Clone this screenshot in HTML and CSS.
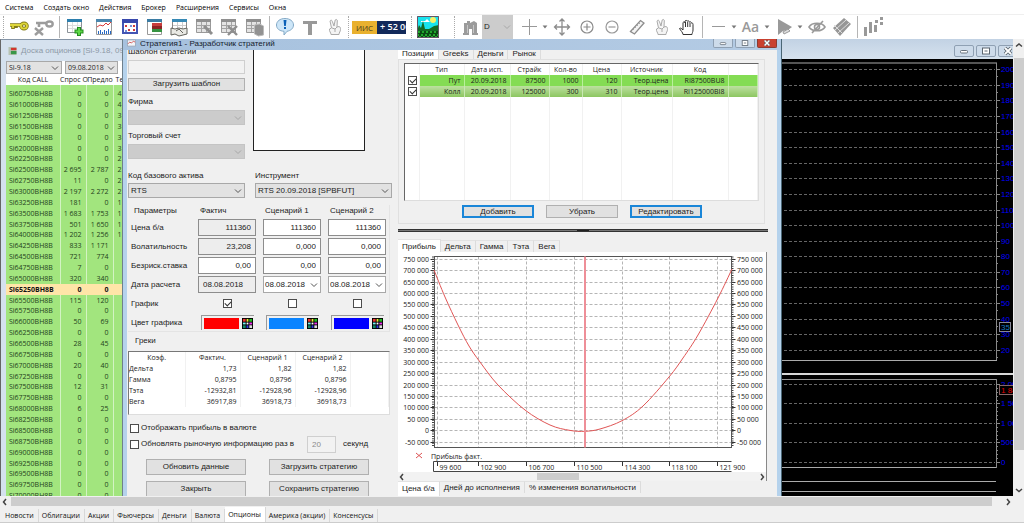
FILE: index.html
```
<!DOCTYPE html>
<html lang="ru">
<head>
<meta charset="utf-8">
<title>Терминал</title>
<link rel="stylesheet" href="styles.css">
</head>
<body>
<div class="app">
<nav class="menu">
<button>Система</button><button>Создать окно</button><button>Действия</button><button>Брокер</button><button>Расширения</button><button>Сервисы</button><button>Окна</button>
</nav>
<div class="toolbar">
<span class="grip"></span>
<button class="tool" aria-label="Подключить"><svg viewBox="0 0 20 20"><g fill="none" stroke="#827b18" stroke-width="3.6"><path d="M1 8h11M4 9v3M7 9v2"/><ellipse cx="15" cy="9" rx="3" ry="2.6"/></g><g fill="none" stroke="#ded63a" stroke-width="1.8"><path d="M1 8h11M4 9v2"/><ellipse cx="15" cy="9" rx="3" ry="2.6"/></g></svg></button>
<button class="tool" aria-label="Отключить"><svg viewBox="0 0 20 20" fill="none" stroke="#9c9c9c"><path stroke-width="2.6" d="M2 6h10M5 7v3"/><ellipse cx="15.500" cy="7" rx="3.200" ry="2.500" stroke-width="2.400"/><path stroke-width="2.4" d="M1 11l8 7M9 11l-8 7"/></svg></button>
<span class="sep"></span>
<button class="tool gap-after" aria-label="Новая таблица"><svg viewBox="0 0 20 20"><path fill="#fff" stroke="#8b9298" d="M2.500 2.500h14v13h-14z"/><path fill="#2d7fae" d="M2 2h15v3H2z"/><path stroke="#ddd" d="M7.500 5v10M12.500 5v10M3 8.500h13M3 11.500h13"/><path stroke="#238d1e" stroke-width="4" d="M14 10v9M9.500 14.500h9"/><path stroke="#5dd746" stroke-width="2" d="M14 11v7M10.500 14.500h7"/></svg></button>
<button class="tool" aria-label="График"><svg viewBox="0 0 20 20"><path fill="#fff" stroke="#9a9a9a" d="M2.500 2.500h15v15h-15z"/><path fill="#4a86ae" d="M2 2h16v3H2z"/><path fill="none" stroke="#d83a3a" d="M3 10l3-2 3 1 3-3 2 2 3-3"/><path stroke="#2869c4" d="M4.500 17v-3M6.500 17v-4M8.500 17v-2M10.500 17v-4M12.500 17v-3M14.500 17v-5M16.500 17v-3"/></svg></button>
<button class="tool" aria-label="Карта"><svg viewBox="0 0 20 20"><path fill="#fff" stroke="#4355b4" stroke-width="2" d="M4 3h14v13H4z"/><path fill="#3849ac" d="M3 2h16v4H3z"/><path fill="#d23b3b" d="M6 8h2v2H6zM14 8h2v2h-2zM9 12h2v2H9zM14 12h2v2h-2z"/><path fill="#7490da" d="M6 13h2v2H6zM11 8h2v2h-2z"/></svg></button>
<button class="tool" aria-label="Котировки"><svg viewBox="0 0 20 20"><path fill="#fff" stroke="#999" d="M3.500 2.500h14v15h-14z"/><path fill="#3b7ca4" d="M3 2h15v3H3z"/><path fill="#c83d3d" d="M8 6h10v3H8z"/><path fill="#8c2525" d="M8 9h10v3H8z"/><path fill="#369342" d="M8 12h10v3H8z"/></svg></button>
<button class="tool" aria-label="Сделки"><svg viewBox="0 0 20 20"><path fill="#fff" stroke="#888" d="M3.500 2.500h14v13h-14z"/><path fill="#3789b5" d="M3 2h15v3H3z"/><path stroke="#ccc" d="M8.500 5v7M13.500 5v7M4 8.500h13"/><path fill="#e9e9e4" stroke="#64645e" d="M2 11l4 1 4-1 4 1 4-1v6l-4 1-4 1-4-2-4 1zM7 14l3-2 4 4"/></svg></button>
<button class="tool" aria-label="Настройка таблицы"><svg viewBox="0 0 20 20"><use href="#grey-table"/><path stroke="#8e8e8e" stroke-width="3" d="M10 9l8 8"/></svg></button>
<button class="tool" aria-label="Удалить таблицу"><svg viewBox="0 0 20 20"><use href="#grey-table"/><path stroke="#8e8e8e" stroke-width="2.400" d="M9 9l9 9M18 9l-9 9"/></svg></button>
<button class="tool" aria-label="Копировать таблицу"><svg viewBox="0 0 20 20"><use href="#grey-table"/><path fill="#929292" stroke="#bbb" d="M10.500 8l5-1 4 2v9l-5 1-4-2z"/></svg></button>
<span class="sep"></span>
<button class="tool" aria-label="Сообщения"><svg viewBox="0 0 20 20"><path fill="#cde6f8" stroke="#83a9c6" d="M10 1.500c5 0 8.500 2.800 8.500 6.500 0 3.400-2.800 5.700-6.500 6.300L9 18v-3.700C4.400 14 1.500 11.700 1.500 8 1.500 4.300 5 1.500 10 1.500z"/><path fill="#0b61b8" d="M8.500 3h3l-.7 6H9.200zM9 10h2v2H9z"/></svg></button>
<button class="tool" aria-label="Текст"><svg viewBox="0 0 20 20"><path fill="#999" d="M3 4h14v3h-5v11H8V7H3z"/></svg></button>
<button class="tool" aria-label="Рука"><svg viewBox="0 0 20 20"><use href="#hand-v"/></svg></button>
<span class="grip"></span>
<button class="promo"><b>ИИС</b><span>+ 52 000</span></button>
<span class="grip"></span>
<button class="tool picture" aria-label="Фон"><svg viewBox="0 0 22 22"><path fill="#19e3ee" d="M0 0h22v22H0z"/><path fill="#fff" d="M4 5h4l2-2 3 3H4z"/><circle cx="16" cy="4" r="3" fill="#f7f169"/><path fill="#146a25" d="M0 15l2-6 2 3 2-7 2 8 4 0 5-3 5-1v13H0z"/><path fill="#0b4a12" d="M0 15h22v7H0z"/><path fill="none" stroke="#29c735" stroke-width="1.500" stroke-dasharray="2 2" d="M1 16h20M0 19h21M2 21h20"/><path fill="none" stroke="#656" d="M.500.500h21v21H.500z"/></svg></button>
<span class="grip"></span>
<button class="tool" aria-label="Биржа"><svg viewBox="0 0 20 20"><path fill="#9b9b9b" d="M4 6h3V4h3v2l4-2 3 2v10h1v2H3v-2h1z"/><path stroke="#c6c6c6" d="M7.500 8v8M13.500 8v8"/><path fill="#fff" d="M9 12h3v6H9z"/></svg></button>
<label class="interval"><select aria-label="Интервал"><option>D</option></select><svg class="chev" viewBox="0 0 8 8"><use href="#chevron"/></svg></label>
<button class="tool" aria-label="Перекрестие"><svg viewBox="0 0 20 20"><path stroke="#999" d="M10.500 2v16M3 9.500h15"/></svg></button>
<button class="drop" aria-label="Варианты курсора"></button>
<button class="tool" aria-label="Переместить"><svg viewBox="0 0 20 20" fill="none" stroke="#8c8c8c" stroke-width="1.300"><path d="M10 2v16M2.500 10h15M7.500 4.500L10 2l2.500 2.500M7.500 15.500L10 18l2.500-2.500M5 7.500L2.500 10 5 12.500M15 7.500l2.500 2.500-2.500 2.500"/></svg></button>
<button class="tool" aria-label="Увеличить"><svg viewBox="0 0 20 20" fill="none" stroke="#8c8c8c" stroke-width="1.200"><circle cx="10" cy="10" r="6"/><path d="M6.500 10h7M10 6.500v7"/></svg></button>
<button class="tool" aria-label="Уменьшить"><svg viewBox="0 0 20 20" fill="none" stroke="#999" stroke-width="1.200"><circle cx="10" cy="10" r="6"/><path d="M6.500 10h7"/></svg></button>
<button class="tool" aria-label="Линейка"><svg viewBox="0 0 20 20"><path fill="#f4f4f4" stroke="#8d8d8d" stroke-width="1.300" d="M3.500 14.500l10-11 3.500 2.500-9.500 11z"/><path stroke="#aaa" d="M6 12l1 1M8 10l1 1M10 8l1 1M12 6l1 1"/></svg></button>
<button class="tool" aria-label="Выбор"><svg viewBox="0 0 20 20"><use href="#hand-v"/></svg></button>
<button class="tool" aria-label="Прокрутка"><svg viewBox="0 0 20 20"><path fill="#fff" stroke="#333" d="M6 17.500c0-2-2.500-4-3.500-6 1-1 2 0 3.500 1.500V5.500c1-1.200 2-.4 2 .5V4c.8-1 2-.6 2.200.2 1-.8 2-.3 2.200 1 1-.8 2-.2 2.200 1 1-.3 1.400.2 1.400 1.300V13c0 2-1 3-1 4.500zM8.500 5v5M10.700 5v5M13 6v4"/></svg></button>
<span class="sep"></span>
<button class="tool" aria-label="Линия"><svg viewBox="0 0 20 20"><path stroke="#999" d="M4 9.500h13"/></svg></button>
<button class="drop" aria-label="Варианты линии"></button>
<button class="tool letters">Aa</button>
<button class="drop" aria-label="Варианты текста"></button>
<button class="tool" aria-label="Маркер"><svg viewBox="0 0 20 20"><path fill="#999" d="M4 2l14 8-4 3-5 1-5 4z"/><path fill="#ddd" stroke="#999" d="M9 15l5-3 2 2-6 3z"/></svg></button>
<button class="drop" aria-label="Варианты маркера"></button>
<button class="tool" aria-label="Скрыть"><svg viewBox="0 0 20 20" fill="none" stroke="#999" stroke-width="1.600"><path d="M2 10c3-5 13-5 16 0-3 5-13 5-16 0zM5 16L16 4"/><circle cx="10" cy="10" r="2.500"/></svg></button>
<button class="tool" aria-label="Слои"><svg viewBox="0 0 20 20"><path fill="#969696" d="M1 11L12 1l7 6L8 19z"/><path stroke="#ddd" d="M3 13L14 3M6 16L17 6M2 8l9 9"/></svg></button>
<span class="sep"></span>
<button class="tool" aria-label="Индикаторы"><svg viewBox="0 0 20 20"><path fill="#999" d="M1 10h3v9H1zM6 5h3v11H6zM11 8h3v7h-3zM12 3h3v3h-3zM17 0h3v3h-3zM17 5h3v3h-3z"/></svg></button>
</div>

<main class="workspace">
<div class="desktop">
<section class="board">
<header class="board-title"><svg class="mini" viewBox="0 0 10 10"><path fill="#b7c2b2" d="M0 0h10v10H0z"/><path fill="#d2362d" d="M3 1h7v3H3z"/><path fill="#38964a" d="M3 5h7v4H3z"/></svg><span>Доска опционов [Si-9.18, 09.08.2018]</span></header>
<div class="board-filters">
<label class="combo"><select aria-label="Базовый актив"><option>Si-9.18</option></select><svg class="chev" viewBox="0 0 8 8"><use href="#chevron"/></svg></label>
<label class="combo"><select aria-label="Дата исполнения"><option>09.08.2018</option></select><svg class="chev" viewBox="0 0 8 8"><use href="#chevron"/></svg></label>
</div>
<div class="board-head"><span>Код CALL</span><span>Спрос О</span><span>Предло</span><span>Те</span></div>
<div class="board-body"><table class="quotes"><tbody id="quotes"></tbody></table></div>
</section>

<section class="volatility">
<header class="vol-title"><button class="win" aria-label="Свернуть"><svg viewBox="0 0 18 10"><use href="#win-min"/></svg></button><button class="win" aria-label="Развернуть"><svg viewBox="0 0 18 10"><use href="#win-max"/></svg></button><button class="win" aria-label="Закрыть окно"><svg viewBox="0 0 18 10"><use href="#win-close"/></svg></button></header>
<svg class="vol-chart" id="vol" width="231" height="437"></svg>
</section>

<section class="dialog">
<header class="dialog-title"><svg class="mini" viewBox="0 0 10 8"><path fill="#f3f5f8" stroke="#9aa7b8" d="M.500.500h9v7h-9z"/><path fill="none" stroke="#d05050" d="M1 5l2-2 2 1 2-2 2 1"/></svg><h1>Стратегия1 - Разработчик стратегий</h1>
<button class="win" aria-label="Свернуть"><svg viewBox="0 0 18 10"><use href="#win-min"/></svg></button><button class="win" aria-label="Развернуть"><svg viewBox="0 0 18 10"><use href="#win-max"/></svg></button><button class="win close" aria-label="Закрыть окно"><svg viewBox="0 0 18 10"><use href="#win-close"/></svg></button></header>
<div class="dialog-body">
<div class="left">
<div class="setup">
<div class="fields">
<label for="tpl">Шаблон стратегии</label>
<input id="tpl" class="box disabled" disabled>
<button class="btn">Загрузить шаблон</button>
<label for="firm">Фирма</label>
<div class="combo dim"><select id="firm" disabled><option></option></select><svg class="chev" viewBox="0 0 8 8"><use href="#chevron"/></svg></div>
<label for="acc">Торговый счет</label>
<div class="combo dim"><select id="acc" disabled><option></option></select><svg class="chev" viewBox="0 0 8 8"><use href="#chevron"/></svg></div>
</div>
<div class="preview"></div>
</div>
<div class="assets">
<div class="fields"><label for="base">Код базового актива</label><div class="combo"><select id="base"><option>RTS</option></select><svg class="chev" viewBox="0 0 8 8"><use href="#chevron"/></svg></div></div>
<div class="fields"><label for="inst">Инструмент</label><div class="combo"><select id="inst"><option>RTS 20.09.2018 [SPBFUT]</option></select><svg class="chev" viewBox="0 0 8 8"><use href="#chevron"/></svg></div></div>
</div>
<div class="params">
<span class="ph">Параметры</span><span class="pc">Фактич</span><span class="pc">Сценарий 1</span><span class="pc">Сценарий 2</span>
<span>Цена б/а</span><input class="box ro" aria-label="Цена, факт" value="111360" readonly><input class="box" aria-label="Цена, сценарий 1" value="111360"><input class="box" aria-label="Цена, сценарий 2" value="111360">
<span>Волатильность</span><input class="box ro" aria-label="Волатильность, факт" value="23,208" readonly><input class="box" aria-label="Волатильность, сценарий 1" value="0,000"><input class="box" aria-label="Волатильность, сценарий 2" value="0,000">
<span>Безриск.ставка</span><input class="box" aria-label="Ставка, факт" value="0,00"><input class="box" aria-label="Ставка, сценарий 1" value="0,00"><input class="box" aria-label="Ставка, сценарий 2" value="0,00">
<span>Дата расчета</span><input class="box ro date" aria-label="Дата, факт" value="08.08.2018" readonly>
<label class="combo white"><select aria-label="Дата, сценарий 1"><option>08.08.2018</option></select><svg class="chev" viewBox="0 0 8 8"><use href="#chevron"/></svg></label>
<label class="combo white"><select aria-label="Дата, сценарий 2"><option>08.08.2018</option></select><svg class="chev" viewBox="0 0 8 8"><use href="#chevron"/></svg></label>
<span>График</span><input type="checkbox" class="check" aria-label="График, факт" checked><input type="checkbox" class="check" aria-label="График, сценарий 1"><input type="checkbox" class="check" aria-label="График, сценарий 2">
<span>Цвет графика</span>
<button class="color" aria-label="Цвет, факт"><i class="red"></i><svg viewBox="0 0 12 12"><use href="#palette"/></svg></button>
<button class="color" aria-label="Цвет, сценарий 1"><i class="azure"></i><svg viewBox="0 0 12 12"><use href="#palette"/></svg></button>
<button class="color" aria-label="Цвет, сценарий 2"><i class="blue"></i><svg viewBox="0 0 12 12"><use href="#palette"/></svg></button>
</div>
<h2>Греки</h2>
<div class="greeks-frame"><table class="greeks">
<colgroup><col class="g-name"><col class="g-val"><col class="g-val"><col class="g-val"><col></colgroup>
<tr><th>Коэф.</th><th>Фактич.</th><th>Сценарий 1</th><th>Сценарий 2</th><th></th></tr>
<tr><td>Дельта</td><td>1,73</td><td>1,82</td><td>1,82</td><td></td></tr>
<tr><td>Гамма</td><td>0,8795</td><td>0,8796</td><td>0,8796</td><td></td></tr>
<tr><td>Тэта</td><td>-12932,81</td><td>-12928,96</td><td>-12928,96</td><td></td></tr>
<tr><td>Вега</td><td>36917,89</td><td>36918,73</td><td>36918,73</td><td></td></tr>
</table></div>
<div class="options">
<label class="opt"><input type="checkbox" class="check"><span>Отображать прибыль в валюте</span></label>
<div class="opt"><input type="checkbox" class="check" id="upd"><label class="upd" for="upd">Обновлять рыночную информацию раз в</label><input class="box disabled secs" id="secs" value="20" disabled><label for="secs">секунд</label></div>
</div>
<div class="actions"><button class="btn">Обновить данные</button><button class="btn">Загрузить стратегию</button><button class="btn">Закрыть</button><button class="btn">Сохранить стратегию</button></div>
</div>

<div class="right">
<div class="tabs top"><button class="on">Позиции</button><button>Greeks</button><button>Деньги</button><button>Рынок</button></div>
<div class="positions">
<div class="pos-frame"><table class="pos">
<colgroup><col class="c1"><col class="c2"><col class="c3"><col class="c4"><col class="c5"><col class="c4"><col class="c6"><col class="c7"><col></colgroup>
<tr><th></th><th>Тип</th><th>Дата исп.</th><th>Страйк</th><th>Кол-во</th><th>Цена</th><th>Источник</th><th>Код</th><th></th></tr>
<tr class="put"><td><input type="checkbox" class="check" aria-label="Пут" checked></td><td>Пут</td><td>20.09.2018</td><td>87500</td><td>1000</td><td>120</td><td>Теор.цена</td><td>RI87500BU8</td><td></td></tr>
<tr class="call"><td><input type="checkbox" class="check" aria-label="Колл" checked></td><td>Колл</td><td>20.09.2018</td><td>125000</td><td>300</td><td>310</td><td>Теор.цена</td><td>RI125000BI8</td><td></td></tr>
<tr class="rest"><td></td><td></td><td></td><td></td><td></td><td></td><td></td><td></td><td></td></tr>
</table></div>
<div class="pos-actions"><button class="btn focus">Добавить</button><button class="btn">Убрать</button><button class="btn focus">Редактировать</button></div>
</div>
<div class="splitter"><i></i></div>
<div class="tabs mid"><button class="on">Прибыль</button><button>Дельта</button><button>Гамма</button><button>Тэта</button><button>Вега</button></div>
<div class="profit"><svg id="profit" width="369" height="220"></svg>
<div class="scroll-x"><svg viewBox="0 0 8 8"><use href="#arrow-l"/></svg><i></i><svg viewBox="0 0 8 8"><use href="#arrow-r"/></svg></div></div>
<div class="tabs bottom"><button class="on">Цена б/а</button><button>Дней до исполнения</button><button>% изменения волатильности</button></div>
</div>
</div>
</section>
</div>
<div class="vbar"><svg viewBox="0 0 8 8"><use href="#arrow-u"/></svg><i></i><svg viewBox="0 0 8 8"><use href="#arrow-d"/></svg></div>
</main>
<div class="hbar"><svg viewBox="0 0 8 8"><use href="#arrow-l"/></svg><i></i><svg viewBox="0 0 8 8"><use href="#arrow-r"/></svg></div>
<nav class="sheets"><button>Новости</button><button>Облигации</button><button>Акции</button><button>Фьючерсы</button><button>Деньги</button><button>Валюта</button><button class="on">Опционы</button><button>Америка (акции)</button><button>Консенсусы</button></nav>
</div>

<svg class="defs" width="0" height="0" aria-hidden="true"><defs>
<g id="chevron" fill="none" stroke="#555"><path d="M1 2.500l3 3 3-3"/></g>
<g id="arrow-l" fill="none" stroke="#444" stroke-width="1.500"><path d="M5 1L2.500 4 5 7"/></g>
<g id="arrow-r" fill="none" stroke="#444" stroke-width="1.500"><path d="M3 1l2.500 3L3 7"/></g>
<g id="arrow-u" fill="none" stroke="#444" stroke-width="1.500"><path d="M1 5.500L4 3l3 2.500"/></g>
<g id="arrow-d" fill="none" stroke="#444" stroke-width="1.500"><path d="M1 3l3 2.500L7 3"/></g>
<g id="win-min"><rect x="5.500" y="4.500" width="7" height="2.500" rx="1" fill="#fff" stroke="#67717c"/></g>
<g id="win-max"><rect x="5.500" y="2" width="7" height="6" fill="#fff" stroke="#5c6670"/><path stroke="#5c6670" d="M7.500 5h3"/></g>
<g id="win-close"><path stroke="#55606a" stroke-width="3.400" d="M6 2l6 6M12 2L6 8"/><path stroke="#fff" stroke-width="1.800" d="M6 2l6 6M12 2L6 8"/></g>
<g id="grey-table"><path fill="#e4e4e4" stroke="#999" d="M2.500 2.500h14v13h-14z"/><path fill="#8f8f8f" d="M2 2h15v3H2z"/><path stroke="#a4a4a4" d="M7.500 5v10M12.500 5v10M3 8.500h13M3 11.500h13"/></g>
<g id="hand-v"><path fill="#f4f4f4" stroke="#aaa" d="M6 17.500c0-2-2-3-1.500-5.500l2-1L5 4c.8-1.400 2-.8 2.300.3L9 9l1.200-6c1-1 2.200-.4 2.100.8L12 10l2-.5c1.500.5 1.500 1.500 1.500 3 0 2-1.500 3-1.500 5zM7 11l3 1 2-2M10 12v3"/></g>
<g id="palette"><path d="M0 0h12v12H0z"/><path fill="#e33" d="M1 1h3v3H1z"/><path fill="#ee3" d="M5 1h2v3H5z"/><path fill="#2b2" d="M8 1h3v3H8z"/><path fill="#7ee" d="M1 5h3v2H1z"/><path fill="#fff" d="M5 5h2v2H5z"/><path fill="#e3e" d="M8 5h3v2H8z"/><path fill="#186" d="M1 8h3v3H1z"/><path fill="#33d" d="M5 8h2v3H5z"/><path fill="#ddd" d="M8 8h3v3H8z"/></g>
</defs></svg>
<script src="app.js"></script>
</body>
</html>
```
FILE: styles.css
```
* { box-sizing: border-box; }
body { margin: 0; overflow: hidden; color: #1c1c1c; font: 8px/10px "Liberation Sans", Arial, sans-serif; }
button, input, select { margin: 0; padding: 0; border: 0; border-radius: 0; background: none; color: inherit; font: inherit; appearance: none; }
h1, h2 { margin: 0; font: inherit; }
svg { display: block; }
.defs { position: absolute; }
.app { display: flex; flex-direction: column; height: 100vh; background: #f0f0f0; }

.menu { display: flex; gap: 10px; height: 15px; padding: 1px 5px 0; background: #fff; border-bottom: 1px solid #efefef; font: 7px/14px "Open Sans", sans-serif; color: #000; }
.toolbar { display: flex; align-items: center; height: 24px; padding: 0 2px; background: #fff; overflow: hidden; }
.tool { display: flex; align-items: center; justify-content: center; flex: none; width: 25px; height: 22px; }
.tool svg { width: 20px; height: 20px; }
.gap-after { margin-right: 4px; }
.sep { flex: none; width: 1px; height: 22px; margin: 0 2px 0 3px; background: #b5b5b5; }
.grip { flex: none; width: 2px; height: 22px; margin: 0 1px; border-left: 1px dotted #aaa; }
.promo { display: flex; align-items: center; flex: none; width: 54px; height: 13px; margin: 0 4px 0 1px; overflow: hidden; background: #12295a; color: #fff; white-space: nowrap; font-family: "Open Sans", sans-serif; }
.promo b { flex: none; width: 25px; height: 13px; line-height: 13px; background: #e9b12f; color: #3a3420; font-weight: 400; text-align: center; }
.promo span { padding-left: 3px; font-size: 9px; font-weight: 600; }
.picture { width: 22px; margin: 0 14px 0 3px; }
.picture svg { width: 22px; height: 22px; }
.interval { position: relative; flex: none; width: 31px; height: 24px; margin-right: 3px; background: #ccc; }
.interval select { width: 100%; height: 24px; padding-left: 2px; }
.interval .chev { opacity: .3; }
.drop { flex: none; width: 6px; height: 4px; margin: 0 1px; background: #777; clip-path: polygon(10% 10%, 90% 10%, 50% 90%); }
.letters { color: #999; font: 600 14px/20px "Open Sans", sans-serif; }

.workspace { display: flex; flex: 1; min-height: 0; }
.desktop { position: relative; flex: 1; overflow: hidden; background: #fff; }
.mini { width: 9px; height: 8px; flex: none; }

.combo { position: relative; display: block; height: 15px; background: #e2e2e2; border: 1px solid #a8a8a8; }
.combo select { display: block; width: 100%; height: 13px; padding-left: 2px; line-height: 13px; }
.chev { position: absolute; right: 2px; top: 50%; width: 8px; height: 8px; margin-top: -4px; pointer-events: none; }
.combo.dim { background: #ccc; border-color: #c4c4c4; }
.combo.dim .chev { opacity: .3; }
.combo.white { height: 17px; background: #fff; }
.combo.white select { height: 15px; padding-left: 1px; }

.board { position: absolute; inset: 0 auto 0 0; width: 126px; display: flex; flex-direction: column; padding-left: 5px; background: #d5e1ee; border-left: 1px solid #666; border-top: 1px solid #8494a6; font: 7px/10px "Open Sans", sans-serif; }
.board-title { display: flex; align-items: center; gap: 4px; height: 21px; padding-left: 2px; overflow: hidden; white-space: nowrap; color: #8d99a6; font: 8px/10px "Liberation Sans", sans-serif; }
.board-filters { display: grid; grid-template-columns: 56px 53px; gap: 3px; height: 13px; background: #fff; }
.board-filters .combo { height: 13px; }
.board-filters select { height: 11px; line-height: 11px; }
.board-head { display: grid; grid-template-columns: 54px 27px 26px 13px; height: 11px; line-height: 11px; overflow: hidden; background: #fff; text-align: center; white-space: nowrap; color: #222; }
.board-body { flex: 1; min-height: 0; overflow: hidden; background: #a2e57e; }
.quotes { width: 100%; height: calc(100% + 13px); margin-top: -7px; border-collapse: collapse; table-layout: fixed; }
.quotes td { padding: 0 4px 0 0; border-right: 1px solid #d3f3c3; line-height: 10px; text-align: right; overflow: hidden; white-space: nowrap; color: #23421c; }
.quotes td:first-child { width: 54px; padding: 0 0 0 3px; text-align: left; }
.quotes td:nth-child(2) { width: 26px; }
.quotes td:nth-child(3) { width: 27px; }
.quotes td:last-child { padding: 0 0 0 4px; text-align: left; border-right: 0; }
.quotes .spot td { background: #ffe5a8; border-color: #ffe5a8; color: #111; font-weight: 700; }

.volatility { position: absolute; inset: 0 0 0 782px; background: #000; }
.vol-title { display: flex; justify-content: flex-end; gap: 2px; height: 20px; padding: 6px 0 0; margin-right: -5px; background: linear-gradient(#c2d2e4, #d6e2ee); }
.win { flex: none; width: 20px; height: 12px; border: 1px solid #8fa0b3; border-radius: 2px; background: #cddbea; }
.win svg { width: 18px; height: 10px; }
.close { background: #c9402f; border-color: #8c3a30; }

.dialog { position: absolute; inset: 0 auto 0 122px; width: 660px; display: flex; flex-direction: column; background: #b5d2ec; border-left: 1px solid #6f808c; border-right: 1px solid #4a6675; }
.dialog-title { display: flex; align-items: flex-start; gap: 2px; height: 11px; padding: 0 4px; background: linear-gradient(90deg, #a6c1de, #b4cbe4); color: #14202c; }
.dialog-title h1 { flex: 1; padding-left: 2px; line-height: 9px; }
.dialog-title .win { height: 9px; border-top: 0; border-radius: 0 0 2px 2px; }
.dialog-title .win svg { height: 8px; }
.dialog-body { display: flex; flex: 1; min-height: 0; margin: 0 4px; overflow: hidden; background: #f0f0f0; }
.left { flex: none; width: 271px; padding-left: 1px; color: #222; }
.setup { display: flex; gap: 8px; height: 115px; }
.fields { display: flex; flex-direction: column; }
.fields label { margin-bottom: 3px; }
.setup .fields { width: 117px; margin-top: -3px; }
.setup .box { margin-bottom: 4px; }
.setup .btn, .setup .combo { margin-bottom: 6px; }
.preview { width: 112px; height: 101px; background: #fff; border: 1px solid #222; border-top: 0; }
.box { height: 17px; padding: 0 4px; background: #fff; border: 1px solid #8d8d8d; text-align: right; }
.ro { background: #ededed; }
.disabled { background: #f2f2f2; border-color: #cfcfcf; color: #8b8b8b; }
.date { text-align: left; }
.btn { height: 16px; background: #e1e1e1; border: 1px solid #b0b0b0; text-align: center; white-space: nowrap; }
.assets { display: grid; grid-template-columns: 117px 137px; gap: 10px; margin-top: 6px; }
.assets label { margin-bottom: 2px; }
.params { display: grid; grid-template-columns: 63px 58px 58px 58px; grid-template-rows: 12px; grid-auto-rows: 17px; align-content: start; gap: 2px 7px; align-items: center; width: 262px; height: 127px; margin-top: 7px; border: 1px solid #e4e4e4; border-top: 0; border-left: 0; }
.params > span { padding-left: 3px; line-height: 12px; white-space: nowrap; }
.params > .ph { padding-left: 6px; }
.params > .pc { padding-left: 2px; }
.params .box { width: 100%; }
.check { flex: none; display: block; width: 9px; height: 9px; background: #fff; border: 1px solid #4c4c4c; }
.check:checked { position: relative; }
.check:checked::after { content: ""; position: absolute; left: 1px; top: 1px; width: 5px; height: 3px; border: solid #333; border-width: 0 0 1px 1px; transform: rotate(-45deg); }
.params .check { justify-self: center; }
.color { display: flex; align-items: center; gap: 3px; width: 53px; height: 15px; margin-left: 3px; padding-left: 2px; border-left: 1px solid #999; border-top: 1px solid #999; }
.color i { width: 35px; height: 11px; }
.color svg { width: 11px; height: 11px; }
.red { background: #f00; }
.azure { background: #0a84ff; }
.blue { background: #00f; }
.left h2 { margin: 4px 0 5px 7px; }
.greeks-frame { width: 262px; height: 64px; background: #fff; border: 1px solid #ddd; border-top-color: #777; border-left-color: #777; }
table { border-collapse: collapse; table-layout: fixed; }
th, td { padding: 0; font-weight: 400; white-space: nowrap; overflow: hidden; }
.greeks, .pos { width: 100%; font: 7px/11px "Open Sans", sans-serif; }
.greeks tr { height: 11px; }
.greeks td, .greeks th { border-right: 1px solid #f1f1f1; }
.greeks td { padding-right: 3px; text-align: right; }
.greeks td:first-child { text-align: left; }
.g-name { width: 56px; }
.g-val { width: 55px; }
.options { margin: 5px 0 0 2px; }
.opt { display: flex; align-items: center; gap: 2px; height: 16px; }
.upd { width: 164px; }
.opt .secs { width: 29px; margin-right: 5px; text-align: left; }
.actions { display: grid; grid-template-columns: 100px 100px; gap: 6px 23px; margin: 7px 0 0 18px; }

.right { flex: 1; min-width: 0; display: flex; flex-direction: column; padding-right: 9px; }
.tabs { display: flex; align-items: flex-end; }
.tabs button { height: 12px; padding: 0 4px; border-right: 1px solid #dcdcdc; border-top: 1px solid #e2e2e2; line-height: 11px; white-space: nowrap; }
.tabs .on { height: 13px; background: #fff; }
.top { height: 9px; }
.top button { height: 12px; }
.positions { display: flex; flex-direction: column; height: 165px; margin-right: 3px; padding: 3px 5px 0; border: 1px solid #e0e0e0; }
.pos-frame { height: 138px; background: #fff; border: 1px solid #ddd; border-top-color: #666; border-left-color: #666; }
.pos { height: 136px; }
.pos tr { height: 11px; }
.pos td, .pos th { border-right: 1px solid #f1f1f1; }
.pos td { padding-right: 3px; text-align: right; }
.pos tr .check { margin-left: 3px; }
.pos .rest { height: auto; }
.put td + td { background: #84dc54; border-color: #b9f09c; }
.call td + td { background: linear-gradient(#bde0a0, #8cc661); border-color: #c9e8b4; }
.c1 { width: 14px; }
.c2 { width: 45px; }
.c3 { width: 46px; }
.c4 { width: 39px; }
.c5 { width: 33px; }
.c6 { width: 51px; }
.c7 { width: 56px; }
.pos-actions { display: grid; grid-template-columns: 72px 72px 72px; gap: 12px; justify-content: start; margin: 4px 0 0 58px; }
.pos-actions .btn { height: 13px; }
.pos-actions .focus { border: 2px solid #1a86d8; }
.splitter { display: flex; justify-content: center; height: 3px; margin-top: 5px; background: #777; border-top: 1px solid #333; border-bottom: 1px solid #333; }
.splitter i { width: 12px; background: #222; }
.mid { margin-top: 7px; }
.profit { flex: none; width: 369px; background: #fff; border-right: 1px solid #888; }
.scroll-x { display: flex; align-items: center; justify-content: space-between; height: 9px; background: #f2f2f2; }
.scroll-x svg, .vbar svg, .hbar svg { width: 8px; height: 8px; flex: none; }
.scroll-x i { width: 42px; height: 7px; margin-right: 48px; background: #cdcdcd; }
.bottom { align-items: flex-start; }
.bottom .on { height: 15px; line-height: 14px; }

.vbar { display: flex; flex-direction: column; align-items: center; width: 11px; padding: 2px 0; background: #f0f0f0; }
.vbar i { flex: 1; width: 10px; margin: 9px 0 36px; background: #cdcdcd; }
.hbar { display: flex; align-items: center; height: 11px; padding: 0 12px 0 1px; background: #f0f0f0; }
.hbar i { flex: 1; height: 9px; margin: 0 12px 0 2px; background: #cdcdcd; }
.sheets { display: flex; align-items: flex-end; height: 16px; padding-left: 2px; border-bottom: 1px solid #ccc; font: 7px/12px "Open Sans", sans-serif; color: #111; }
.sheets button { height: 13px; padding: 0 4px 0 3px; border-right: 1px solid #d8d8d8; white-space: nowrap; }
.sheets .on { height: 15px; background: #fff; }

.axis { font: 7px "Open Sans", sans-serif; fill: #222; }
.vol-axis { font: 8px "Liberation Sans", sans-serif; fill: #0000ff; }
.vol-axis.now { fill: #1779c4; }
.vol-axis.last { fill: #e00000; }
```
FILE: app.js
```
const quotes = {62500: ['2 695', '2 787'], 62750: ['11', '0'], 63000: ['2 197', '2 272'], 63250: ['181', '0'],
  63500: ['1 683', '1 753'], 63750: ['501', '1 650'], 64000: ['1 202', '1 256'], 64250: ['833', '1 171'],
  64500: ['721', '774'], 64750: ['7', '0'], 65000: ['320', '340'], 65500: ['115', '120'], 66000: ['50', '69'],
  66500: ['28', '45'], 67000: ['20', '40'], 67500: ['12', '31'], 68000: ['6', '25']};
let rows = '';
for (let s = 60500; s <= 70000; s += 250) {
  const q = quotes[s] || ['0', '0'];
  const edge = s < 61250 ? '4' : s < 62250 ? '3' : s < 63250 ? '2' : s < 64250 ? '1' : '';
  rows += `<tr${s === 65250 ? ' class="spot"' : ''}><td>Si${s}BH8B</td><td>${q[0]}</td><td>${q[1]}</td><td>${edge}</td></tr>`;
}
document.getElementById('quotes').innerHTML = rows;

const line = (x1, y1, x2, y2, extra) => `<path d="M${x1} ${y1}L${x2} ${y2}" fill="none" ${extra}/>`;

// Profit curve
const L = 36.5, R = 333.5, T = 4.5, B = 195.5;
let p = '';
for (let i = 0; i <= 16; i++) {
  const v = 750 - i * 50, y = Math.round(6.7 + i * 11.44) + .5;
  const label = v === 0 ? '0' : v + ' 000';
  p += line(L, y, R, y, 'stroke="#b5b5b5" stroke-dasharray="3 2"');
  p += line(L - 4, y, L, y, 'stroke="#333"') + line(R, y, R + 4, y, 'stroke="#333"');
  p += `<text class="axis" x="31" y="${y + 2.5}" text-anchor="end">${label}</text><text class="axis" x="339" y="${y + 2.5}">${label}</text>`;
}
const ticks = [[39.5, '99 600'], [80.5, '102 900'], [128.5, '106 700'], [176.5, '110 500'], [224.5, '114 300'], [271.5, '118 100'], [319.5, '121 900']];
for (const [x, t] of ticks) {
  p += line(x, T, x, B, 'stroke="#b5b5b5" stroke-dasharray="3 2"') + line(x, 210, x, 214, 'stroke="#333"');
  p += `<text class="axis" x="${x + 2}" y="217.5">${t}</text>`;
}
p += line(L - 1, T, L - 1, B, 'stroke="#444" stroke-width="3" stroke-dasharray="1 1.3"');
p += line(R + 1, T, R + 1, B, 'stroke="#444" stroke-width="2" stroke-dasharray="1 1.3"');
p += `<rect x="${L}" y="${T}" width="${R - L}" height="${B - T}" fill="none" stroke="#555"/>`;
p += `<path d="M${R} 209.500H35.500V219.500H${R}" fill="none" stroke="#444"/>`;
const pts = [[36, 18], [47, 45], [60, 73], [71, 94], [82, 110], [100, 133], [127, 158], [152, 173], [172, 178.4], [187, 179.3], [202, 177], [224, 168.7], [245, 154], [271, 125], [285, 106], [300, 83], [320, 46], [334, 17]];
let d = `M${pts[0]}`;
for (let i = 0; i < pts.length - 1; i++) {
  const a = pts[i - 1] || pts[i], b = pts[i], c = pts[i + 1], e = pts[i + 2] || c;
  d += `C${b[0] + (c[0] - a[0]) / 6} ${b[1] + (c[1] - a[1]) / 6} ${c[0] - (e[0] - b[0]) / 6} ${c[1] - (e[1] - b[1]) / 6} ${c[0]} ${c[1]}`;
}
p += `<path d="${d}" fill="none" stroke="#e05555"/>`;
p += line(187, T, 187, B, 'stroke="#ee8f98" stroke-width="2"');
p += '<path d="M18 201l6 5M24 201l-6 5" stroke="#dd5555"/><text class="axis" x="33" y="206.500">Прибыль факт.</text>';
document.getElementById('profit').innerHTML = p;

// Volatility and volume panes
let v = line(0, 4, 215, 4, 'stroke="#555" stroke-width="2"') + line(214.5, 4, 214.5, 301, 'stroke="#888"');
for (let i = 0; i < 19; i++) {
  const y = Math.round(10.3 + i * 15.58) + .5;
  v += line(2, y, 213, y, 'stroke="#666" stroke-dasharray="3 2"') + line(214, y, 218, y, 'stroke="#888"') + line(214, y + 7, 216, y + 7, 'stroke="#888"');
  v += `<text class="vol-axis" x="219" y="${y + 2.5}">${200 - i * 10}</text>`;
}
v += line(0, 301.5, 215, 301.5, 'stroke="#aaa"') + line(0, 315, 231, 315, 'stroke="#d8d8d8" stroke-width="2"');
v += line(0, 320.5, 214, 320.5, 'stroke="#999"') + line(214.5, 320, 214.5, 409, 'stroke="#888"');
['2 000', '1 500', '1 000', '500', '0'].forEach((t, i) => {
  const y = Math.round(324.5 + i * 19.5) + .5;
  v += line(2, y, 213, y, 'stroke="#666" stroke-dasharray="3 2"') + line(214, y, 218, y, 'stroke="#888"');
  if (i < 4) for (let k = 1; k < 5; k++) v += line(214, y + k * 4, 216, y + k * 4, 'stroke="#888"');
  v += `<text class="vol-axis" x="219" y="${y + 2.5}">${t}</text>`;
});
for (const y of [408.5, 422.5, 432.5]) v += line(0, y, 214, y, 'stroke="#aaa"');
v += '<rect x="217.500" y="263.500" width="11" height="9" fill="#000" stroke="#889"/><text class="vol-axis now" x="219" y="271">35</text>';
v += '<rect x="217.500" y="326.500" width="20" height="9" fill="#000" stroke="#866"/><text class="vol-axis last" x="219" y="334">1 840</text>';
document.getElementById('vol').innerHTML = v;
```
